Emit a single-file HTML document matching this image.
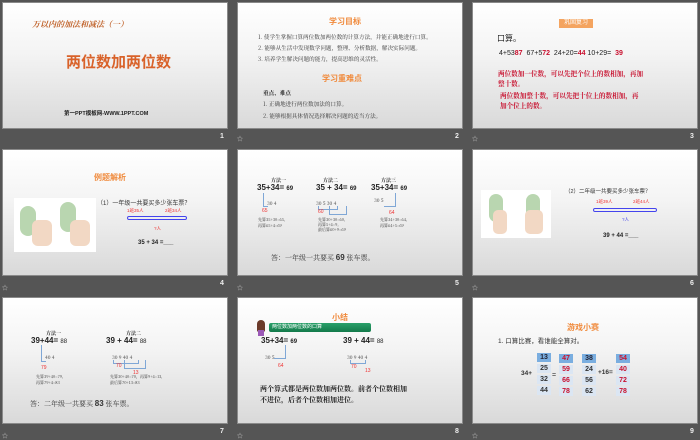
<!DOCTYPE html>
<html><head><meta charset="utf-8"><style>
*{margin:0;padding:0;box-sizing:border-box}
body{width:700px;height:438px;background:#555;position:relative;overflow:hidden;font-family:"Liberation Sans","Noto Sans CJK SC",sans-serif}
.s{position:absolute;width:226px;height:127px;background:linear-gradient(#ffffff 0%,#f4f4f4 40%,#d9d9d9 100%);overflow:hidden;border:1px solid #8a8a8a}
.s div,.s span{position:absolute;white-space:nowrap}
.n{position:absolute;color:#eee;font-size:7px;font-weight:bold}
.st{position:absolute;color:#ccc;font-size:6px}
.or{color:#f08a3c;font-weight:bold;font-size:8px}
.sm{font-size:4.6px;color:#333;font-family:"Noto Serif CJK SC","Liberation Serif",serif}
.rd{color:#c8102e}
.bk{color:#222;font-weight:bold}
.ln{position:absolute;border:1px solid #7fa7d6}
.cell{position:absolute;width:14px;height:9px;font-size:7px;font-weight:bold;text-align:center;line-height:9px;background:#dbe6f3;color:#333}
</style></head><body>

<!-- slide 1 -->
<div class="s" style="left:2px;top:2px">
<div style="left:29px;top:16px;font-size:8px;color:#c0622a;font-style:italic;font-weight:bold;font-family:'Noto Serif CJK SC',serif">万以内的加法和减法（一）</div>
<div style="left:63px;top:48px;font-size:15px;font-weight:bold;color:#d9622a">两位数加两位数</div>
<div style="left:61px;top:106px;font-size:5.5px;font-weight:bold;color:#222">第一PPT模板网-WWW.1PPT.COM</div>
</div>
<div class="n" style="left:220px;top:133px">1</div>

<!-- slide 2 -->
<div class="s" style="left:237px;top:2px">
<div class="or" style="left:91px;top:13px">学习目标</div>
<div class="sm" style="left:20px;top:30px;font-size:5.6px">1. 使学生掌握口算两位数加两位数的计算方法，并能正确地进行口算。</div>
<div class="sm" style="left:20px;top:41px;font-size:5.6px">2. 能够从生活中发现数学问题，整理、分析数据，解决实际问题。</div>
<div class="sm" style="left:20px;top:52px;font-size:5.6px">3. 培养学生解决问题的能力，提高思维的灵活性。</div>
<div class="or" style="left:84px;top:70px">学习重难点</div>
<div class="sm bk" style="left:25px;top:86px;font-size:5.6px">重点、难点</div>
<div class="sm" style="left:25px;top:97px;font-size:5.6px">1. 正确地进行两位数加法的口算。</div>
<div class="sm" style="left:25px;top:109px;font-size:5.6px">2. 能够根据具体情况选择解决问题的适当方法。</div>
</div>
<div class="n" style="left:455px;top:133px">2</div>
<div class="st" style="left:237px;top:134px">☆</div>

<!-- slide 3 -->
<div class="s" style="left:472px;top:2px">
<div style="left:86px;top:16px;width:34px;height:9px;background:#f4a460;color:#fff;font-size:6px;text-align:center;line-height:9px">巩固复习</div>
<div style="left:24px;top:30px;font-size:8px;color:#222">口算。</div>
<div style="left:26px;top:47px;font-size:7px;color:#222">4+53<span class="rd" style="position:static;font-weight:bold">87</span>&nbsp;&nbsp;67+5<span class="rd" style="position:static;font-weight:bold">72</span>&nbsp;&nbsp;24+20=<span class="rd" style="position:static;font-weight:bold">44</span> 10+29=&nbsp;&nbsp;<span class="rd" style="position:static;font-weight:bold">39</span></div>
<div class="sm rd" style="left:25px;top:65px;font-size:6.6px;font-weight:bold;color:#c8102e">两位数加一位数，可以先把个位上的数相加，再加</div>
<div class="sm rd" style="left:25px;top:75px;font-size:6.6px;font-weight:bold;color:#c8102e">整十数。</div>
<div class="sm rd" style="left:27px;top:87px;font-size:6.6px;font-weight:bold;color:#c8102e">两位数加整十数，可以先把十位上的数相加，再</div>
<div class="sm rd" style="left:27px;top:97px;font-size:6.6px;font-weight:bold;color:#c8102e">加个位上的数。</div>
</div>
<div class="n" style="left:690px;top:133px">3</div>
<div class="st" style="left:472px;top:134px">☆</div>

<!-- slide 4 -->
<div class="s" style="left:2px;top:149px">
<div class="or" style="left:91px;top:22px">例题解析</div>
<div style="left:11px;top:48px;width:82px;height:54px;background:#fff">
<div style="left:6px;top:8px;width:16px;height:30px;background:#b9d6b0;border-radius:8px"></div>
<div style="left:46px;top:4px;width:16px;height:30px;background:#b9d6b0;border-radius:8px"></div>
<div style="left:18px;top:22px;width:20px;height:26px;background:#f2d8c4;border-radius:6px"></div>
<div style="left:56px;top:22px;width:20px;height:26px;background:#f2d8c4;border-radius:6px"></div>
</div>
<div style="left:94px;top:48px;font-size:6px;color:#333">（1）一年级一共要买多少张车票？</div>
<div style="left:124px;top:58px;font-size:4.5px;color:#e33">1班35人</div>
<div style="left:162px;top:58px;font-size:4.5px;color:#e33">2班34人</div>
<div style="left:124px;top:66px;width:60px;height:4px;border:1px solid #4444ee;border-radius:2px"></div>
<div style="left:151px;top:76px;font-size:4.5px;color:#e33">?人</div>
<div style="left:135px;top:90px;font-size:6px;font-weight:bold;color:#222">35 + 34 =___</div>
</div>
<div class="n" style="left:220px;top:280px">4</div>
<div class="st" style="left:2px;top:283px">☆</div>

<!-- slide 5 -->
<div class="s" style="left:237px;top:149px">
<div class="sm bk" style="left:33px;top:27px;font-size:5px">方法一</div>
<div class="bk" style="left:19px;top:33px;font-size:8px">35+34= <span style="position:static;font-size:6px">69</span></div>
<div class="sm" style="left:29px;top:50px;font-size:5px;color:#333">30 4</div>
<div class="ln" style="left:25px;top:43px;width:5px;height:14px;border-top:none;border-right:none"></div>
<div style="left:24px;top:58px;font-size:5px;color:#e33">65</div>
<div class="sm" style="left:20px;top:67px;font-size:4px">先算35+30=65,</div>
<div class="sm" style="left:20px;top:73px;font-size:4px">再算65+4=69</div>
<div class="sm bk" style="left:85px;top:27px;font-size:5px">方法二</div>
<div class="bk" style="left:78px;top:33px;font-size:8px">35 + 34= <span style="position:static;font-size:6px">69</span></div>
<div class="sm" style="left:78px;top:50px;font-size:5px;color:#333">30 5 30 4</div>
<div class="ln" style="left:80px;top:56px;width:20px;height:4px;border-top:none"></div>
<div class="ln" style="left:91px;top:56px;width:18px;height:9px;border-top:none"></div>
<div style="left:80px;top:59px;font-size:5px;color:#e33">60</div>
<div class="sm" style="left:80px;top:67px;font-size:4px">先算30+30=60,</div>
<div class="sm" style="left:80px;top:72px;font-size:4px">再算5+4=9,</div>
<div class="sm" style="left:80px;top:77px;font-size:4px">最后算60+9=69</div>
<div class="sm bk" style="left:143px;top:27px;font-size:5px">方法三</div>
<div class="bk" style="left:133px;top:33px;font-size:8px">35+34= <span style="position:static;font-size:6px">69</span></div>
<div class="sm" style="left:136px;top:47px;font-size:5px;color:#333">30 5</div>
<div class="ln" style="left:146px;top:43px;width:12px;height:14px;border-top:none;border-left:none"></div>
<div style="left:151px;top:60px;font-size:5px;color:#e33">64</div>
<div class="sm" style="left:142px;top:67px;font-size:4px">先算34+30=64,</div>
<div class="sm" style="left:142px;top:73px;font-size:4px">再算64+5=69</div>
<div class="sm" style="left:33px;top:103px;font-size:7px">答：一年级一共要买 <b style="font-size:8px;font-family:'Liberation Sans'">69</b> 张车票。</div>
</div>
<div class="n" style="left:455px;top:280px">5</div>
<div class="st" style="left:237px;top:283px">☆</div>

<!-- slide 6 -->
<div class="s" style="left:472px;top:149px">
<div style="left:8px;top:40px;width:70px;height:48px;background:#fff">
<div style="left:8px;top:4px;width:14px;height:28px;background:#b9d6b0;border-radius:7px"></div>
<div style="left:45px;top:4px;width:14px;height:28px;background:#b9d6b0;border-radius:7px"></div>
<div style="left:12px;top:20px;width:14px;height:24px;background:#f2d8c4;border-radius:5px"></div>
<div style="left:44px;top:20px;width:18px;height:24px;background:#f2d8c4;border-radius:5px"></div>
</div>
<div style="left:92px;top:37px;font-size:5.5px;color:#333">（2）二年级一共要买多少张车票？</div>
<div style="left:123px;top:49px;font-size:4.5px;color:#e33">1班39人</div>
<div style="left:160px;top:49px;font-size:4.5px;color:#e33">2班44人</div>
<div style="left:120px;top:58px;width:64px;height:4px;border:1px solid #4444ee;border-radius:2px"></div>
<div style="left:149px;top:67px;font-size:4.5px;color:#44e">?人</div>
<div style="left:130px;top:83px;font-size:6px;font-weight:bold;color:#222">39 + 44 =___</div>
</div>
<div class="n" style="left:690px;top:280px">6</div>
<div class="st" style="left:472px;top:283px">☆</div>

<!-- slide 7 -->
<div class="s" style="left:2px;top:297px">
<div class="sm bk" style="left:43px;top:32px;font-size:5px">方法一</div>
<div class="bk" style="left:28px;top:38px;font-size:8px">39+44= <span style="position:static;font-size:6px;font-weight:normal">88</span></div>
<div class="sm" style="left:42px;top:56px;font-size:5px">40 4</div>
<div class="ln" style="left:38px;top:47px;width:5px;height:17px;border-top:none;border-right:none"></div>
<div style="left:38px;top:67px;font-size:5px;color:#e33">79</div>
<div class="sm" style="left:33px;top:76px;font-size:4px">先算39+40=79,</div>
<div class="sm" style="left:33px;top:82px;font-size:4px">再算79+4=83</div>
<div class="sm bk" style="left:123px;top:32px;font-size:5px">方法二</div>
<div class="bk" style="left:103px;top:38px;font-size:8px">39 + 44= <span style="position:static;font-size:6px;font-weight:normal">88</span></div>
<div class="sm" style="left:109px;top:56px;font-size:5px">30 9 40 4</div>
<div class="ln" style="left:110px;top:62px;width:26px;height:4px;border-top:none"></div>
<div class="ln" style="left:121px;top:62px;width:22px;height:9px;border-top:none"></div>
<div style="left:113px;top:65px;font-size:5px;color:#e33">70</div>
<div style="left:130px;top:72px;font-size:5px;color:#e33">13</div>
<div class="sm" style="left:107px;top:76px;font-size:4px">先算30+40=70，再算9+4=13,</div>
<div class="sm" style="left:107px;top:82px;font-size:4px">最后算70+13=83</div>
<div class="sm" style="left:27px;top:101px;font-size:7px">答：二年级一共要买 <b style="font-size:8px;font-family:'Liberation Sans'">83</b> 张车票。</div>
</div>
<div class="n" style="left:220px;top:428px">7</div>
<div class="st" style="left:2px;top:431px">☆</div>

<!-- slide 8 -->
<div class="s" style="left:237px;top:297px">
<div class="or" style="left:94px;top:14px">小结</div>
<div style="left:19px;top:22px;width:8px;height:12px;background:#6b3a2a;border-radius:4px 4px 2px 2px"></div>
<div style="left:20px;top:32px;width:6px;height:6px;background:#9b59b6"></div>
<div style="left:31px;top:25px;width:102px;height:9px;background:linear-gradient(#2aa06a,#137a4a);border-radius:2px;color:#fff;font-size:5px;line-height:9px;padding-left:3px">两位数加两位数的口算</div>
<div class="bk" style="left:23px;top:38px;font-size:8px">35+34= <span style="position:static;font-size:6px">69</span></div>
<div class="sm" style="left:27px;top:56px;font-size:5px">30 5</div>
<div class="ln" style="left:36px;top:47px;width:12px;height:14px;border-top:none;border-left:none"></div>
<div style="left:40px;top:65px;font-size:5px;color:#e33">64</div>
<div class="bk" style="left:105px;top:38px;font-size:8px">39 + 44= <span style="position:static;font-size:6px;font-weight:normal">88</span></div>
<div class="sm" style="left:109px;top:56px;font-size:5px">30 9 40 4</div>
<div class="ln" style="left:112px;top:62px;width:16px;height:4px;border-top:none"></div>
<div style="left:113px;top:66px;font-size:5px;color:#e33">70</div>
<div style="left:127px;top:70px;font-size:5px;color:#e33">13</div>
<div class="sm bk" style="left:22px;top:86px;font-size:7px">两个算式都是两位数加两位数。前者个位数相加</div>
<div class="sm bk" style="left:22px;top:97px;font-size:7px">不进位，后者个位数相加进位。</div>
</div>
<div class="n" style="left:455px;top:428px">8</div>
<div class="st" style="left:237px;top:431px">☆</div>

<!-- slide 9 -->
<div class="s" style="left:472px;top:297px">
<div class="or" style="left:94px;top:24px">游戏小赛</div>
<div style="left:25px;top:37px;font-size:6.5px;color:#333">1. 口算比赛，看谁能全算对。</div>
<div class="cell" style="left:64px;top:55px;background:#7aaee0;color:#223">13</div>
<div class="cell" style="left:64px;top:66px">25</div>
<div class="cell" style="left:64px;top:77px">32</div>
<div class="cell" style="left:64px;top:88px">44</div>
<div style="left:48px;top:72px;font-size:6.5px;font-weight:bold;color:#333">34+</div>
<div style="left:79px;top:74px;font-size:7px;color:#333">=</div>
<div class="cell" style="left:86px;top:56px;background:#7aaee0;color:#c8102e">47</div>
<div class="cell" style="left:86px;top:67px;color:#c8102e">59</div>
<div class="cell" style="left:86px;top:78px;color:#c8102e">66</div>
<div class="cell" style="left:86px;top:89px;color:#c8102e">78</div>
<div class="cell" style="left:109px;top:56px;background:#7aaee0;color:#223">38</div>
<div class="cell" style="left:109px;top:67px">24</div>
<div class="cell" style="left:109px;top:78px">56</div>
<div class="cell" style="left:109px;top:89px">62</div>
<div style="left:125px;top:71px;font-size:6.5px;font-weight:bold;color:#333">+16=</div>
<div class="cell" style="left:143px;top:56px;background:#7aaee0;color:#c8102e">54</div>
<div class="cell" style="left:143px;top:67px;color:#c8102e">40</div>
<div class="cell" style="left:143px;top:78px;color:#c8102e">72</div>
<div class="cell" style="left:143px;top:89px;color:#c8102e">78</div>
</div>
<div class="n" style="left:690px;top:428px">9</div>
<div class="st" style="left:472px;top:431px">☆</div>

</body></html>
